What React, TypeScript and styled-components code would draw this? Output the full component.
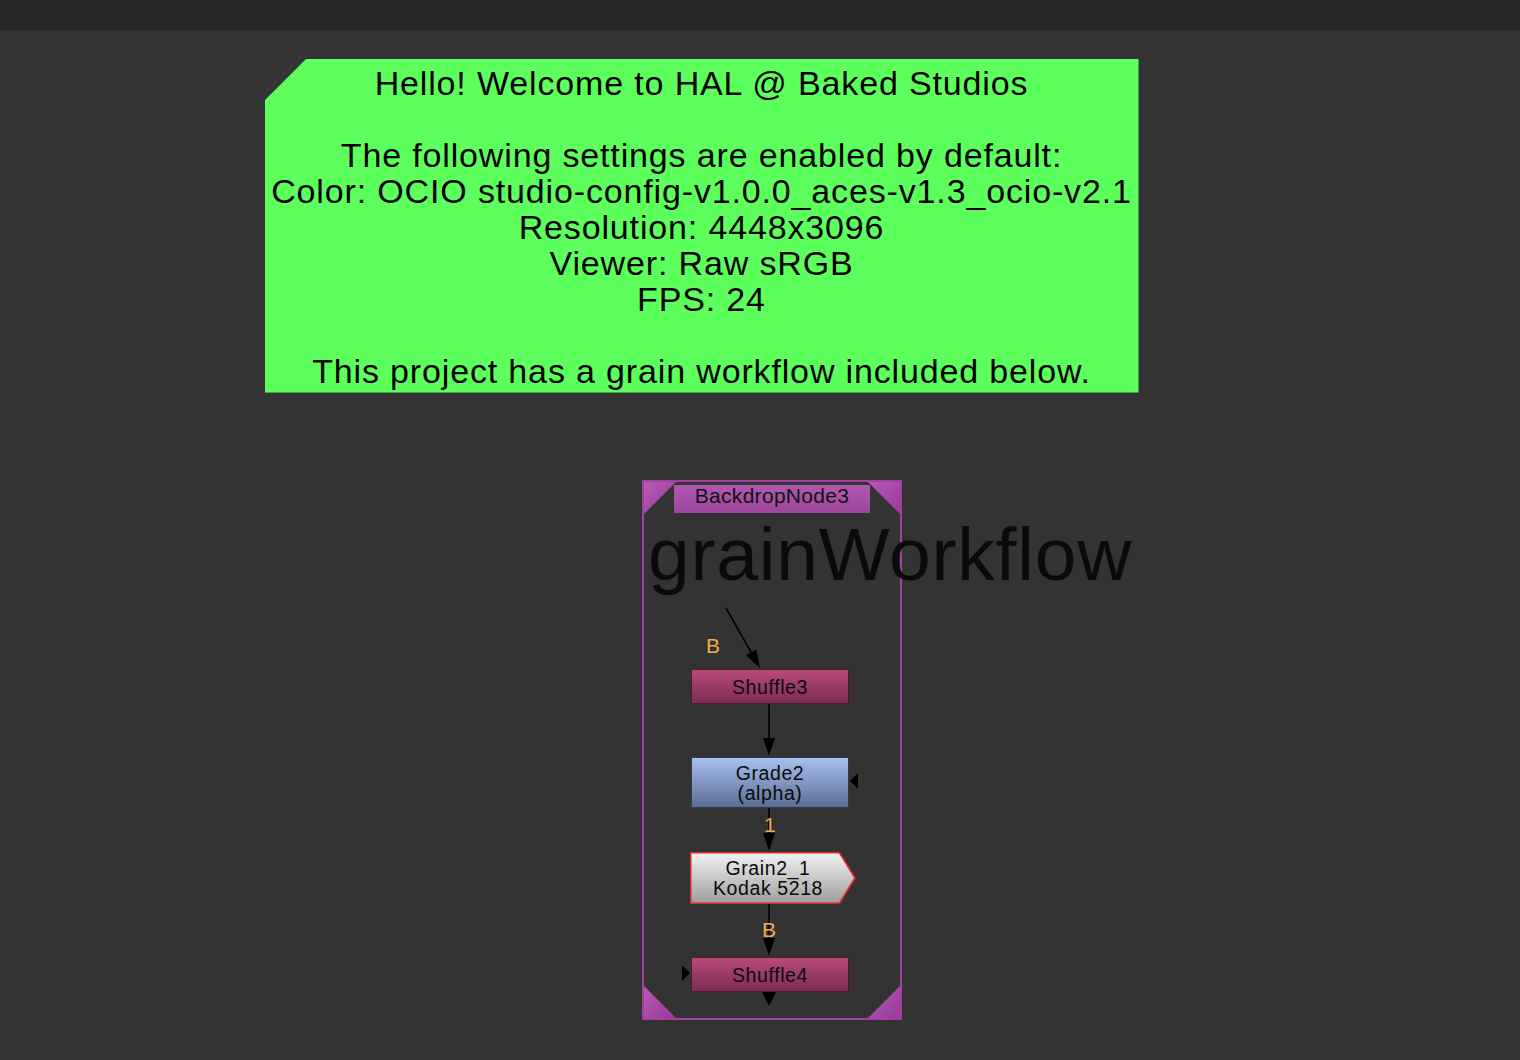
import React from "react";
import styled, { createGlobalStyle, css } from "styled-components";

const GlobalStyle = createGlobalStyle`
  html, body {
    margin: 0;
    padding: 0;
    background: #333333;
  }
  body {
    font-family: "Liberation Sans", Arial, sans-serif;
    overflow: hidden;
  }
`;

const Page = styled.div`
  display: flex;
  flex-direction: column;
  width: 1520px;
  height: 1060px;
  background: #333333;
`;

const TopBar = styled.div`
  height: 30px;
  flex: none;
  background: #262626;
`;

// free canvas of the node graph: nodes are placed by their graph coordinates
const Canvas = styled.div`
  position: relative;
  flex: 1;
  overflow: hidden;
`;

const StickyNote = styled.div`
  position: absolute;
  left: 265px;
  top: 29px;
  width: 874px;
  height: 334px;
  box-sizing: border-box;
  background: #5cff5c;
  border-right: 1px solid #3da53d;
  border-bottom: 1px solid #3da53d;
  clip-path: polygon(41px 0, 100% 0, 100% 100%, 0 100%, 0 41px);
  padding-top: 6px;
  color: #000;
  font-size: 34px;
  letter-spacing: 0.85px;
  line-height: 36px;
  text-align: center;
  white-space: pre;
`;

const Backdrop = styled.div`
  position: absolute;
  left: 642px;
  top: 450px;
  width: 260px;
  height: 540px;
  box-sizing: border-box;
  border: 2px solid #a23fa2;
`;

const Corner = styled.div<{ $pos: "tl" | "tr" | "bl" | "br" }>`
  position: absolute;
  width: 32px;
  height: 32px;
  background: linear-gradient(135deg, #b55cb5, #993a99);
  ${({ $pos }) =>
    $pos === "tl"
      ? css`
          left: 0;
          top: 0;
          clip-path: polygon(0 0, 100% 0, 0 100%);
        `
      : $pos === "tr"
      ? css`
          right: 0;
          top: 0;
          clip-path: polygon(0 0, 100% 0, 100% 100%);
        `
      : $pos === "bl"
      ? css`
          left: 0;
          bottom: 0;
          clip-path: polygon(0 0, 100% 100%, 0 100%);
        `
      : css`
          right: 0;
          bottom: 0;
          clip-path: polygon(100% 0, 100% 100%, 0 100%);
        `}
`;

const BackdropTitle = styled.div`
  position: absolute;
  left: 30px;
  top: 3px;
  width: 196px;
  height: 28px;
  background: linear-gradient(#b058b0, #9c469c);
  color: #111;
  font-size: 21px;
  letter-spacing: 0.3px;
  line-height: 22px;
  text-align: center;
`;

const BackdropLabel = styled.div`
  position: absolute;
  left: 648px;
  top: 484px;
  color: #0a0a0a;
  font-size: 75px;
  letter-spacing: 0.8px;
  line-height: 80px;
  white-space: nowrap;
`;

const nodeTones = {
  shuffle: css`
    background: linear-gradient(#b84a7c, #7c2c52);
    border: 1px solid #4a1a30;
  `,
  grade: css`
    background: linear-gradient(#a7c0ef, #5c6d94);
    border: 1px solid #2e3a52;
  `,
};

const Node = styled.div<{ $tone: "shuffle" | "grade"; $x: number; $y: number; $h: number }>`
  position: absolute;
  left: ${({ $x }) => $x}px;
  top: ${({ $y }) => $y}px;
  width: 158px;
  height: ${({ $h }) => $h}px;
  box-sizing: border-box;
  display: flex;
  flex-direction: column;
  align-items: center;
  justify-content: center;
  color: #0a0a0a;
  font-size: 19.5px;
  letter-spacing: 0.6px;
  line-height: 20px;
  ${({ $tone }) => nodeTones[$tone]}
`;

const GrainNode = styled.div`
  position: absolute;
  left: 690px;
  top: 822px;
  width: 166px;
  height: 52px;
`;

const GrainBody = styled.div`
  position: absolute;
  inset: 0;
  background: #e02828;
  clip-path: polygon(0 0, 150px 0, 166px 26px, 150px 52px, 0 52px);
`;

const GrainFill = styled.div`
  position: absolute;
  inset: 0;
  background: linear-gradient(#f4f4f4, #9c9c9c);
  clip-path: polygon(1.5px 1.5px, 149px 1.5px, 164px 26px, 149px 50.5px, 1.5px 50.5px);
  display: flex;
  flex-direction: column;
  align-items: center;
  justify-content: center;
  padding-right: 10px;
  box-sizing: border-box;
  color: #0a0a0a;
  font-size: 19.5px;
  letter-spacing: 0.6px;
  line-height: 20px;
`;

const InputLabel = styled.div<{ $x: number; $y: number }>`
  position: absolute;
  left: ${({ $x }) => $x}px;
  top: ${({ $y }) => $y}px;
  color: #f5a84c;
  font-size: 21px;
  line-height: 20px;
`;

const Edges = styled.svg`
  position: absolute;
  left: 0;
  top: 0;
  width: 1520px;
  height: 1030px;
  pointer-events: none;
`;

const Arrow = ({ x1, y1, x2, y2 }: { x1: number; y1: number; x2: number; y2: number }) => {
  const a = Math.atan2(y2 - y1, x2 - x1);
  const len = 18;
  const w = 6;
  const bx = x2 - Math.cos(a) * len;
  const by = y2 - Math.sin(a) * len;
  const px = -Math.sin(a) * w;
  const py = Math.cos(a) * w;
  return (
    <g>
      <line x1={x1} y1={y1} x2={bx} y2={by} stroke="#000" strokeWidth={1.6} />
      <polygon points={`${x2},${y2} ${bx + px},${by + py} ${bx - px},${by - py}`} fill="#000" />
    </g>
  );
};

export default function App() {
  return (
    <Page>
      <GlobalStyle />
      <TopBar />
      <Canvas>
        <StickyNote>
          {`Hello! Welcome to HAL @ Baked Studios

The following settings are enabled by default:
Color: OCIO studio-config-v1.0.0_aces-v1.3_ocio-v2.1
Resolution: 4448x3096
Viewer: Raw sRGB
FPS: 24

This project has a grain workflow included below.`}
        </StickyNote>

        <Backdrop>
          <Corner $pos="tl" />
          <Corner $pos="tr" />
          <Corner $pos="bl" />
          <Corner $pos="br" />
          <BackdropTitle>BackdropNode3</BackdropTitle>
        </Backdrop>
        <BackdropLabel>grainWorkflow</BackdropLabel>

        <Edges>
          <Arrow x1={726} y1={578} x2={760} y2={638} />
          <Arrow x1={769} y1={673} x2={769} y2={726} />
          <Arrow x1={769} y1={777} x2={769} y2={821} />
          <Arrow x1={769} y1={873} x2={769} y2={926} />
          <polygon points="850,751 858,743 858,759" fill="#000" />
          <polygon points="682,935 690,943 682,951" fill="#000" />
          <polygon points="762,962 776,962 769,976" fill="#000" />
        </Edges>

        <InputLabel $x={706} $y={606}>B</InputLabel>
        <Node $tone="shuffle" $x={691} $y={639} $h={35}>
          Shuffle3
        </Node>
        <Node $tone="grade" $x={691} $y={727} $h={51}>
          <span>Grade2</span>
          <span>(alpha)</span>
        </Node>
        <InputLabel $x={764} $y={785}>1</InputLabel>
        <GrainNode>
          <GrainBody />
          <GrainFill>
            <span>Grain2_1</span>
            <span>Kodak 5218</span>
          </GrainFill>
        </GrainNode>
        <InputLabel $x={762} $y={890}>B</InputLabel>
        <Node $tone="shuffle" $x={691} $y={927} $h={35}>
          Shuffle4
        </Node>
      </Canvas>
    </Page>
  );
}
